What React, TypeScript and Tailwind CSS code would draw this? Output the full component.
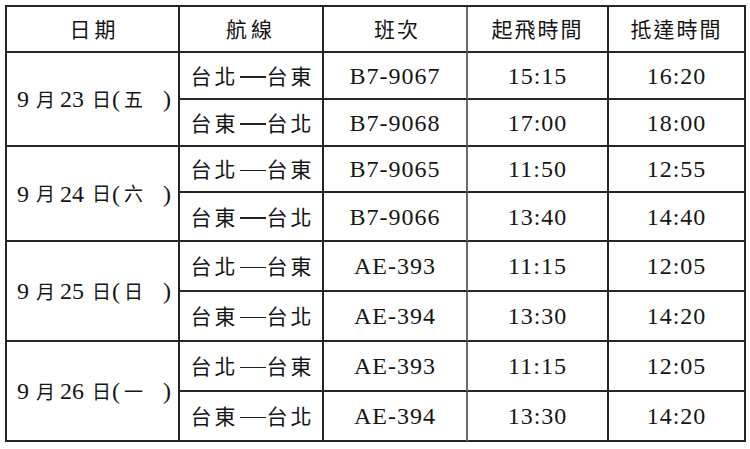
import React from 'react';

const cjk = "font-['Noto_Sans_CJK_TC',sans-serif]";
const num = "font-['Liberation_Serif','Noto_Sans_CJK_TC',serif]";

type Flight = { route: string; code: string; dep: string; arr: string };
type Day = { num: string; weekday: string; h: [string, string]; flights: Flight[] };

const days: Day[] = [
  {
    num: '23',
    weekday: '五',
    h: ['h-[47px]', 'h-[47px]'],
    flights: [
      { route: 'TN', code: 'B7-9067', dep: '15:15', arr: '16:20' },
      { route: 'NT', code: 'B7-9068', dep: '17:00', arr: '18:00' },
    ],
  },
  {
    num: '24',
    weekday: '六',
    h: ['h-[46px]', 'h-[49px]'],
    flights: [
      { route: 'TN', code: 'B7-9065', dep: '11:50', arr: '12:55' },
      { route: 'NT', code: 'B7-9066', dep: '13:40', arr: '14:40' },
    ],
  },
  {
    num: '25',
    weekday: '日',
    h: ['h-[50px]', 'h-[50px]'],
    flights: [
      { route: 'TN', code: 'AE-393', dep: '11:15', arr: '12:05' },
      { route: 'NT', code: 'AE-394', dep: '13:30', arr: '14:20' },
    ],
  },
  {
    num: '26',
    weekday: '一',
    h: ['h-[50px]', 'h-[50px]'],
    flights: [
      { route: 'TN', code: 'AE-393', dep: '11:15', arr: '12:05' },
      { route: 'NT', code: 'AE-394', dep: '13:30', arr: '14:20' },
    ],
  },
];

// route label: 台北—台東 or 台東—台北
function Route({ dir }: { dir: string }) {
  const [a, b] = dir === 'TN' ? ['台北', '台東'] : ['台東', '台北'];
  return (
    <span className={`${cjk} text-[21px] tracking-[3px] text-[#151515]`}>
      {a}
      <span className="inline-block w-[26px] h-[1.5px] bg-[#222] align-middle mx-[1px] -mt-[2px]" />
      {b}
    </span>
  );
}

const cell = 'flex items-center justify-center border-r-2 border-b-2 border-[#262626]';

export default function App() {
  return (
    <div className="w-[750px] h-[449px] bg-white pt-[5px] pl-[5px]">
      <div className="flex w-[741px] flex-col border-l-2 border-t-2 border-[#262626] text-[#151515]">
        {/* header */}
        <div className="flex h-[46px]">
          <div className={`${cell} w-[173px] pl-[4px]`}>
            <span className={`${cjk} text-[21px] tracking-[4px]`}>日期</span>
          </div>
          <div className={`${cell} w-[144px]`}>
            <span className={`${cjk} text-[21px] tracking-[4px]`}>航線</span>
          </div>
          <div className={`${cell} w-[144px] border-r-[#6a6a6a] pl-[4px]`}>
            <span className={`${cjk} text-[21px] tracking-[2px]`}>班次</span>
          </div>
          <div className={`${cell} w-[141px]`}>
            <span className={`${cjk} text-[21px] tracking-[2px]`}>起飛時間</span>
          </div>
          <div className={`${cell} w-[137px]`}>
            <span className={`${cjk} text-[21px] tracking-[2px]`}>抵達時間</span>
          </div>
        </div>

        {days.map((d) => (
          <div key={d.num} className="flex">
            <div className="flex w-[173px] items-center border-r-2 border-b-2 border-[#262626] pl-[10px]">
              <span className="flex items-center">
                <span className={`${num} text-[24px]`}>9</span>
                <span className={`${cjk} text-[19px] ml-[7px]`}>月</span>
                <span className={`${num} text-[24px] ml-[5px]`}>{d.num}</span>
                <span className={`${cjk} text-[19px] ml-[8px]`}>日</span>
                <span className={`${num} text-[24px] ml-[1px]`}>(</span>
                <span className={`${cjk} text-[19px] ml-[4px]`}>{d.weekday}</span>
                <span className={`${num} text-[24px] ml-[20px]`}>)</span>
              </span>
            </div>
            <div className="flex flex-col">
              {d.flights.map((f, i) => (
                <div key={i} className={`flex ${d.h[i]}`}>
                  <div className={`${cell} w-[144px] pl-[3px]`}>
                    <Route dir={f.route} />
                  </div>
                  <div className={`${cell} w-[144px] border-r-[#6a6a6a]`}>
                    <span className={`${num} text-[24px] tracking-[1px]`}>{f.code}</span>
                  </div>
                  <div className={`${cell} w-[141px]`}>
                    <span className={`${num} text-[24px] tracking-[1px]`}>{f.dep}</span>
                  </div>
                  <div className={`${cell} w-[137px]`}>
                    <span className={`${num} text-[24px] tracking-[1px]`}>{f.arr}</span>
                  </div>
                </div>
              ))}
            </div>
          </div>
        ))}
      </div>
    </div>
  );
}
